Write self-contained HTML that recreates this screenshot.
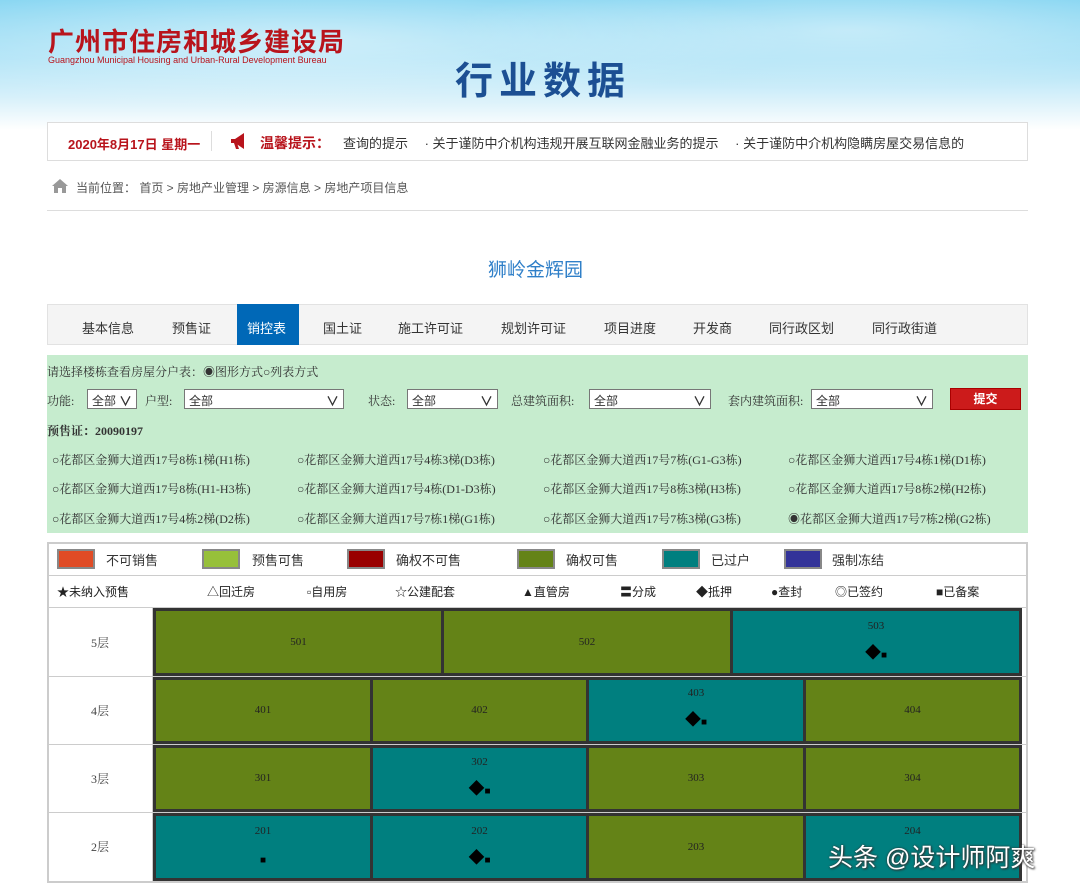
<!DOCTYPE html>
<html><head><meta charset="utf-8"><style>
*{margin:0;padding:0;box-sizing:border-box}
body{width:1080px;height:894px;position:relative;overflow:hidden;background:#fff;font-family:"Liberation Sans","Noto Sans CJK SC",sans-serif;color:#333}
.a{position:absolute;white-space:nowrap}
.hdr{position:absolute;left:0;top:0;width:1080px;height:130px;background:radial-gradient(ellipse 500px 70px at 300px 40px,rgba(255,255,255,.5),transparent),radial-gradient(ellipse 400px 60px at 850px 30px,rgba(255,255,255,.45),transparent),linear-gradient(180deg,#7fd3f1 0%,#a8e1f6 45%,#dff3fb 80%,#fff 100%)}
.sel{position:absolute;height:20px;border:1px solid #777;background:#fff;font-size:12px;padding:2px 4px;top:389px}
.sel:after{content:"∨";position:absolute;right:4px;top:1px;font-size:13px;font-weight:bold}
.rd{font-size:12px;color:#333;font-family:"Liberation Serif","Noto Serif CJK SC",serif}
.u{position:absolute;border:1px solid #333;font-size:11px;color:#222;text-align:center;font-family:"Liberation Serif","Noto Serif CJK SC",serif}
.u i{display:block;font-style:normal;margin-top:14px;font-size:16px;line-height:16px;color:#000}
.u i b{font-size:10px}
.o{background:#648317}.t{background:#007f7f}
.fl{position:absolute;left:48px;width:104px;font-size:12px;text-align:center;font-family:"Liberation Serif","Noto Serif CJK SC",serif;color:#444}
.sw{position:absolute;top:549px;width:38px;height:20px;border:2px solid #888}
.lg{position:absolute;top:550px;font-size:13px;color:#333}
.sy{position:absolute;top:583px;font-size:12px;color:#222}
</style></head><body>
<div class="hdr"></div>
<div class="a" style="left:48px;top:22px;font-size:26px;font-weight:bold;color:#b8141c;letter-spacing:1px">广州市住房和城乡建设局</div>
<div class="a" style="left:48px;top:55px;font-size:9px;color:#b8141c">Guangzhou Municipal Housing and Urban-Rural Development Bureau</div>
<div class="a" style="left:455px;top:50px;font-size:38px;font-weight:bold;color:#1c4f93;letter-spacing:6px">行业数据</div>

<div class="a" style="left:47px;top:122px;width:981px;height:39px;border:1px solid #ddd;background:#fff"></div>
<div class="a" style="left:68px;top:134px;font-size:13px;font-weight:bold;color:#b8141c">2020年8月17日 星期一</div>
<div class="a" style="left:211px;top:131px;width:1px;height:20px;background:#ddd"></div>
<svg class="a" style="left:229px;top:132px" width="20" height="18" viewBox="0 0 20 18"><path d="M2 7h4l9-6v16l-9-6H2z" fill="#b8141c"/><path d="M5 11l2 6h3l-2-6z" fill="#b8141c"/></svg>
<div class="a" style="left:260px;top:133px;font-size:14px;font-weight:bold;color:#b8141c">温馨提示：</div>
<div class="a" style="left:343px;top:133px;font-size:13px;color:#333">查询的提示　 · 关于谨防中介机构违规开展互联网金融业务的提示　 · 关于谨防中介机构隐瞒房屋交易信息的</div>

<svg class="a" style="left:52px;top:179px" width="16" height="14" viewBox="0 0 16 14"><path d="M8 0L0 7h2v7h4V9h4v5h4V7h2z" fill="#999"/></svg>
<div class="a" style="left:76px;top:179px;font-size:12px;color:#555">当前位置： 首页 &gt; 房地产业管理 &gt; 房源信息 &gt; 房地产项目信息</div>
<div class="a" style="left:47px;top:210px;width:981px;height:1px;background:#ddd"></div>

<div class="a" style="left:488px;top:255px;font-size:19px;color:#2f7fc8">狮岭金辉园</div>

<div class="a" style="left:47px;top:304px;width:981px;height:41px;background:#f4f4f4;border:1px solid #e2e2e2"></div>
<div class="a" style="left:237px;top:304px;width:62px;height:41px;background:#0068b7"></div>
<div class="a" style="left:82px;top:318px;font-size:13px">基本信息</div>
<div class="a" style="left:172px;top:318px;font-size:13px">预售证</div>
<div class="a" style="left:247px;top:318px;font-size:13px;color:#fff">销控表</div>
<div class="a" style="left:323px;top:318px;font-size:13px">国土证</div>
<div class="a" style="left:398px;top:318px;font-size:13px">施工许可证</div>
<div class="a" style="left:501px;top:318px;font-size:13px">规划许可证</div>
<div class="a" style="left:604px;top:318px;font-size:13px">项目进度</div>
<div class="a" style="left:693px;top:318px;font-size:13px">开发商</div>
<div class="a" style="left:769px;top:318px;font-size:13px">同行政区划</div>
<div class="a" style="left:872px;top:318px;font-size:13px">同行政街道</div>

<div class="a" style="left:47px;top:355px;width:981px;height:178px;background:#c6ecce"></div>
<div class="a rd" style="left:47px;top:363px">请选择楼栋查看房屋分户表：◉图形方式○列表方式</div>
<div class="a rd" style="left:47px;top:392px">功能:</div><div class="sel" style="left:87px;width:50px">全部</div>
<div class="a rd" style="left:145px;top:392px">户型:</div><div class="sel" style="left:184px;width:160px">全部</div>
<div class="a rd" style="left:368px;top:392px">状态:</div><div class="sel" style="left:407px;width:91px">全部</div>
<div class="a rd" style="left:511px;top:392px">总建筑面积:</div><div class="sel" style="left:589px;width:122px">全部</div>
<div class="a rd" style="left:728px;top:392px">套内建筑面积:</div><div class="sel" style="left:811px;width:122px">全部</div>
<div class="a" style="left:950px;top:388px;width:71px;height:22px;background:#cc1b1b;border:1px solid #a00;color:#fff;font-size:12px;font-weight:bold;text-align:center;line-height:20px">提交</div>
<div class="a rd" style="left:47px;top:422px;font-weight:bold">预售证：20090197</div>
<div class="a rd" style="left:52px;top:451px">○花都区金狮大道西17号8栋1梯(H1栋)</div>
<div class="a rd" style="left:297px;top:451px">○花都区金狮大道西17号4栋3梯(D3栋)</div>
<div class="a rd" style="left:543px;top:451px">○花都区金狮大道西17号7栋(G1-G3栋)</div>
<div class="a rd" style="left:788px;top:451px">○花都区金狮大道西17号4栋1梯(D1栋)</div>
<div class="a rd" style="left:52px;top:480px">○花都区金狮大道西17号8栋(H1-H3栋)</div>
<div class="a rd" style="left:297px;top:480px">○花都区金狮大道西17号4栋(D1-D3栋)</div>
<div class="a rd" style="left:543px;top:480px">○花都区金狮大道西17号8栋3梯(H3栋)</div>
<div class="a rd" style="left:788px;top:480px">○花都区金狮大道西17号8栋2梯(H2栋)</div>
<div class="a rd" style="left:52px;top:510px">○花都区金狮大道西17号4栋2梯(D2栋)</div>
<div class="a rd" style="left:297px;top:510px">○花都区金狮大道西17号7栋1梯(G1栋)</div>
<div class="a rd" style="left:543px;top:510px">○花都区金狮大道西17号7栋3梯(G3栋)</div>
<div class="a rd" style="left:788px;top:510px">◉花都区金狮大道西17号7栋2梯(G2栋)</div>

<div class="a" style="left:47px;top:542px;width:981px;height:341px;border:2px solid #ccc"></div>
<div class="a" style="left:48px;top:575px;width:979px;height:1px;background:#ccc"></div>
<div class="a" style="left:48px;top:607px;width:979px;height:1px;background:#ccc"></div>
<div class="sw" style="left:57px;background:#e04b25"></div><div class="lg" style="left:106px">不可销售</div>
<div class="sw" style="left:202px;background:#97c03a"></div><div class="lg" style="left:252px">预售可售</div>
<div class="sw" style="left:347px;background:#900"></div><div class="lg" style="left:396px">确权不可售</div>
<div class="sw" style="left:517px;background:#648317"></div><div class="lg" style="left:566px">确权可售</div>
<div class="sw" style="left:662px;background:#007f7f"></div><div class="lg" style="left:711px">已过户</div>
<div class="sw" style="left:784px;background:#333399"></div><div class="lg" style="left:832px">强制冻结</div>
<div class="sy" style="left:57px">★未纳入预售</div>
<div class="sy" style="left:207px">△回迁房</div>
<div class="sy" style="left:307px">▫自用房</div>
<div class="sy" style="left:395px">☆公建配套</div>
<div class="sy" style="left:522px">▲直管房</div>
<div class="sy" style="left:620px">〓分成</div>
<div class="sy" style="left:696px">◆抵押</div>
<div class="sy" style="left:771px">●查封</div>
<div class="sy" style="left:835px">◎已签约</div>
<div class="sy" style="left:936px">■已备案</div>

<div class="a" style="left:152px;top:608px;width:1px;height:274px;background:#ccc"></div>
<div class="a" style="left:48px;top:676px;width:979px;height:1px;background:#ccc"></div>
<div class="a" style="left:48px;top:744px;width:979px;height:1px;background:#ccc"></div>
<div class="a" style="left:48px;top:812px;width:979px;height:1px;background:#ccc"></div>
<div class="fl" style="top:634px">5层</div>
<div class="fl" style="top:702px">4层</div>
<div class="fl" style="top:770px">3层</div>
<div class="fl" style="top:838px">2层</div>

<div class="a" style="left:153px;top:608px;width:869px;height:68px;background:#333"></div>
<div class="a" style="left:153px;top:677px;width:869px;height:67px;background:#333"></div>
<div class="a" style="left:153px;top:745px;width:869px;height:67px;background:#333"></div>
<div class="a" style="left:153px;top:813px;width:869px;height:68px;background:#333"></div>

<div class="u o" style="left:155px;top:610px;width:287px;height:64px;line-height:62px">501</div>
<div class="u o" style="left:443px;top:610px;width:288px;height:64px;line-height:62px">502</div>
<div class="u t" style="left:732px;top:610px;width:288px;height:64px;padding-top:9px">503<i>◆<b>■</b></i></div>

<div class="u o" style="left:155px;top:679px;width:216px;height:63px;line-height:61px">401</div>
<div class="u o" style="left:372px;top:679px;width:215px;height:63px;line-height:61px">402</div>
<div class="u t" style="left:588px;top:679px;width:216px;height:63px;padding-top:7px">403<i>◆<b>■</b></i></div>
<div class="u o" style="left:805px;top:679px;width:215px;height:63px;line-height:61px">404</div>

<div class="u o" style="left:155px;top:747px;width:216px;height:63px;line-height:61px">301</div>
<div class="u t" style="left:372px;top:747px;width:215px;height:63px;padding-top:8px">302<i>◆<b>■</b></i></div>
<div class="u o" style="left:588px;top:747px;width:216px;height:63px;line-height:61px">303</div>
<div class="u o" style="left:805px;top:747px;width:215px;height:63px;line-height:61px">304</div>

<div class="u t" style="left:155px;top:815px;width:216px;height:64px;padding-top:9px">201<i><b>■</b></i></div>
<div class="u t" style="left:372px;top:815px;width:215px;height:64px;padding-top:9px">202<i>◆<b>■</b></i></div>
<div class="u o" style="left:588px;top:815px;width:216px;height:64px;line-height:62px">203</div>
<div class="u t" style="left:805px;top:815px;width:215px;height:64px;padding-top:9px">204</div>

<div class="a" style="left:828px;top:838px;font-size:25px;color:#fff;text-shadow:0 0 2px #333,1px 1px 2px #333">头条 @设计师阿爽</div>
</body></html>
